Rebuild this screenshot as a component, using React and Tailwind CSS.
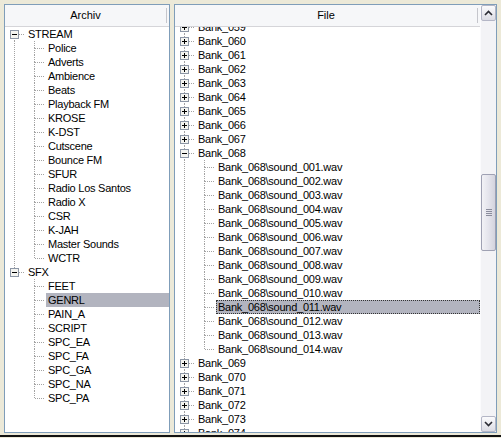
import React from "react";

const FONT = { fontFamily: '"Liberation Sans", Arial, sans-serif' };

const leftTree = [
  { label: "STREAM", box: "minus", cells: ["rootFirst"] },
  ...[
    "Police", "Adverts", "Ambience", "Beats", "Playback FM", "KROSE", "K-DST",
    "Cutscene", "Bounce FM", "SFUR", "Radio Los Santos", "Radio X", "CSR",
    "K-JAH", "Master Sounds",
  ].map((label) => ({ label, cells: ["pipe", "tee"] })),
  { label: "WCTR", cells: ["pipe", "end"] },
  { label: "SFX", box: "minus", cells: ["rootLast"] },
  ...["FEET", "GENRL", "PAIN_A", "SCRIPT", "SPC_EA", "SPC_FA", "SPC_GA", "SPC_NA"].map(
    (label) => ({ label, cells: ["blank", "tee"], selected: label === "GENRL" })
  ),
  { label: "SPC_PA", cells: ["blank", "end"] },
];

const pad = (n) => String(n).padStart(3, "0");

const rightTree = [];
for (let b = 59; b <= 74; b++) {
  rightTree.push({ label: `Bank_${pad(b)}`, box: b === 68 ? "minus" : "plus", cells: ["tee"] });
  if (b === 68) {
    for (let s = 1; s <= 14; s++) {
      rightTree.push({
        label: `Bank_068\\sound_${pad(s)}.wav`,
        cells: ["pipe", s === 14 ? "end" : "tee"],
        selected: s === 11,
        focus: s === 11,
      });
    }
  }
}

function Cell({ kind, box }) {
  const line = "#a3a3a3";
  const dash = "1 1";
  const up = ["tee", "end", "rootLast"].includes(kind);
  const down = ["tee", "rootFirst"].includes(kind);
  const horiz = ["tee", "end", "rootFirst", "rootLast"].includes(kind);
  return (
    <svg width="20" height="14" className="shrink-0 block" shapeRendering="crispEdges">
      {up && <line x1="9.5" y1="0" x2="9.5" y2="7" stroke={line} strokeDasharray={dash} />}
      {down && <line x1="9.5" y1="7" x2="9.5" y2="14" stroke={line} strokeDasharray={dash} />}
      {kind === "pipe" && <line x1="9.5" y1="0" x2="9.5" y2="14" stroke={line} strokeDasharray={dash} />}
      {horiz && <line x1="10" y1="7.5" x2="20" y2="7.5" stroke={line} strokeDasharray={dash} />}
      {box && (
        <g>
          <rect x="5.5" y="3.5" width="8" height="8" fill="#f4f4f0" stroke="#8c96a6" />
          <line x1="7" y1="7.5" x2="12" y2="7.5" stroke="#000" />
          {box === "plus" && <line x1="9.5" y1="5" x2="9.5" y2="10" stroke="#000" />}
        </g>
      )}
    </svg>
  );
}

function Row({ item }) {
  return (
    <div className="flex h-[14px] items-center">
      {item.cells.map((c, i) => (
        <Cell key={i} kind={c} box={i === item.cells.length - 1 ? item.box : null} />
      ))}
      <div
        className={
          "ml-[1px] flex-1 h-[14px] flex items-center pl-[2px] whitespace-nowrap tracking-[-0.25px] " +
          (item.selected ? "bg-[#b2b4bf] " : "") +
          (item.focus ? "outline outline-1 outline-dotted outline-[#333] -outline-offset-1" : "")
        }
      >
        {item.label}
      </div>
    </div>
  );
}

function Header({ title }) {
  return (
    <div className="h-[22px] shrink-0 flex items-center bg-[#f6f7f9] border-b border-[#d5d5d9]">
      <div className="flex-1 text-center">{title}</div>
      <div className="w-[1px] h-[15px] bg-[#c5c6cc] mr-[2px]" />
    </div>
  );
}

function Chevron({ down }) {
  return (
    <svg width="9" height="6" viewBox="0 0 9 6">
      <path
        d={down ? "M1 1 L4.5 4.5 L8 1" : "M1 5 L4.5 1.5 L8 5"}
        fill="none"
        stroke="#2b2b33"
        strokeWidth="1.6"
      />
    </svg>
  );
}

function ScrollBar() {
  return (
    <div className="w-[16px] shrink-0 flex flex-col bg-[#f3f3f6] border-l border-[#fbfbfd]">
      <div className="h-[16px] shrink-0 flex items-center justify-center border border-[#b4b6c6] rounded-[2px] bg-gradient-to-b from-[#fbfbfd] to-[#dcdce4]">
        <Chevron />
      </div>
      <div className="h-[153px] shrink-0" />
      <div className="h-[77px] shrink-0 border border-[#9fa1b3] rounded-[2px] bg-gradient-to-r from-[#f2f2f6] via-[#e4e4ec] to-[#d4d4de] flex flex-col items-center justify-center gap-[1px]">
        <div className="w-[6px] h-[1px] bg-[#8a8c9c]" />
        <div className="w-[6px] h-[1px] bg-[#8a8c9c]" />
        <div className="w-[6px] h-[1px] bg-[#8a8c9c]" />
        <div className="w-[6px] h-[1px] bg-[#8a8c9c]" />
      </div>
      <div className="flex-1" />
      <div className="h-[16px] shrink-0 flex items-center justify-center border border-[#b4b6c6] rounded-[2px] bg-gradient-to-b from-[#fbfbfd] to-[#dcdce4]">
        <Chevron down />
      </div>
    </div>
  );
}

export default function App() {
  return (
    <div
      className="w-[501px] h-[438px] bg-[#ece9d8] text-[11px] text-black flex flex-col overflow-hidden select-none"
      style={FONT}
    >
      <div className="flex-1 flex gap-[4px] px-[4px] pt-[4px] pb-[2px] min-h-0">
        {/* Archiv */}
        <div className="w-[166px] flex flex-col border border-[#7f9db9] bg-white min-h-0">
          <Header title="Archiv" />
          <div className="flex-1 overflow-hidden">
            {leftTree.map((item, i) => (
              <Row key={i} item={item} />
            ))}
          </div>
        </div>
        {/* File */}
        <div className="flex-1 flex border border-[#7f9db9] bg-white min-h-0">
          <div className="flex-1 flex flex-col min-w-0">
            <Header title="File" />
            <div className="flex-1 overflow-hidden">
              <div className="-mt-[7px]">
                {rightTree.map((item, i) => (
                  <Row key={i} item={item} />
                ))}
              </div>
            </div>
          </div>
          <ScrollBar />
        </div>
      </div>
      <div className="h-[2px] bg-[#111]" />
      <div className="h-[1px] bg-[#ece9d8]" />
    </div>
  );
}
